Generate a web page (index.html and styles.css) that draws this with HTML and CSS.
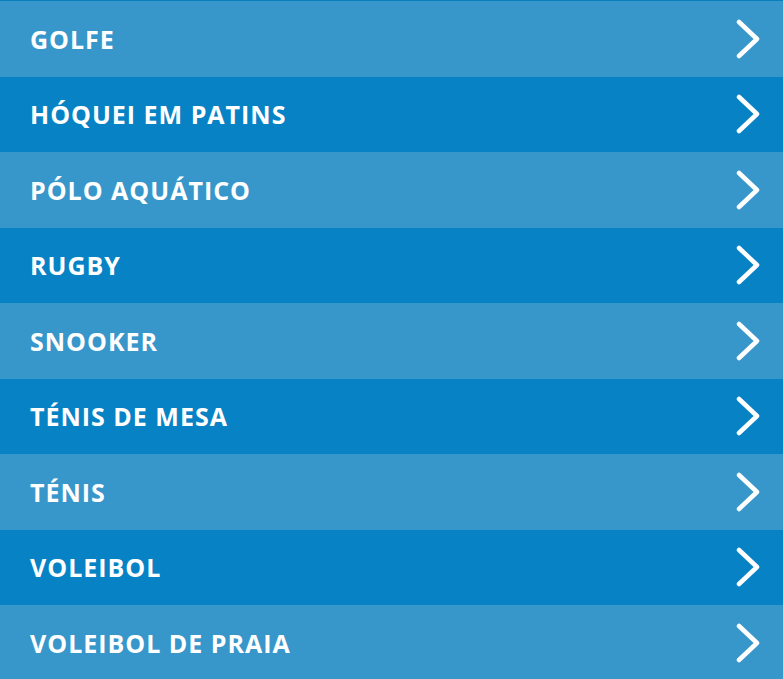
FILE: index.html
```html
<!DOCTYPE html>
<html>
<head>
    <meta charset="UTF-8">
    <title>Modalidades</title>
    <link rel="stylesheet" href="styles.css">
</head>
<body>
<ul class="sports" id="sports">
    <li><a href="#"><span class="name">GOLFE</span><svg class="arrow" viewBox="0 0 24 40"><path d="M3 3 L21 20 L3 37"/></svg></a></li>
    <li><a href="#"><span class="name">HÓQUEI EM PATINS</span><svg class="arrow" viewBox="0 0 24 40"><path d="M3 3 L21 20 L3 37"/></svg></a></li>
    <li><a href="#"><span class="name">PÓLO AQUÁTICO</span><svg class="arrow" viewBox="0 0 24 40"><path d="M3 3 L21 20 L3 37"/></svg></a></li>
    <li><a href="#"><span class="name">RUGBY</span><svg class="arrow" viewBox="0 0 24 40"><path d="M3 3 L21 20 L3 37"/></svg></a></li>
    <li><a href="#"><span class="name">SNOOKER</span><svg class="arrow" viewBox="0 0 24 40"><path d="M3 3 L21 20 L3 37"/></svg></a></li>
    <li><a href="#"><span class="name">TÉNIS DE MESA</span><svg class="arrow" viewBox="0 0 24 40"><path d="M3 3 L21 20 L3 37"/></svg></a></li>
    <li><a href="#"><span class="name">TÉNIS</span><svg class="arrow" viewBox="0 0 24 40"><path d="M3 3 L21 20 L3 37"/></svg></a></li>
    <li><a href="#"><span class="name">VOLEIBOL</span><svg class="arrow" viewBox="0 0 24 40"><path d="M3 3 L21 20 L3 37"/></svg></a></li>
    <li><a href="#"><span class="name">VOLEIBOL DE PRAIA</span><svg class="arrow" viewBox="0 0 24 40"><path d="M3 3 L21 20 L3 37"/></svg></a></li>
</ul>
</body>
</html>
```

FILE: styles.css
```css
* {
    margin: 0;
    padding: 0;
}

ul, li {
    list-style: none;
}

html, body {
    width: 100%;
    height: 100%;
    overflow: hidden;
    background: #3797cb;
}

.sports {
    border-top: 1px solid #0a7dbd;
    font-family: "Open Sans", "Liberation Sans", sans-serif;
}

.sports li {
    height: 75.5px;
    background: #3797cb;
}

.sports li:nth-child(even) {
    background: #0783c5;
}

.sports a {
    display: flex;
    align-items: center;
    justify-content: space-between;
    height: 100%;
    padding: 0 23px 0 30px;
    color: #fff;
    text-decoration: none;
}

.sports .name {
    font-size: 25px;
    font-weight: 700;
    letter-spacing: 1px;
}

.sports .arrow {
    width: 24px;
    height: 40px;
    fill: none;
    stroke: #fff;
    stroke-width: 4.5;
    stroke-linecap: round;
    stroke-linejoin: round;
}
```
